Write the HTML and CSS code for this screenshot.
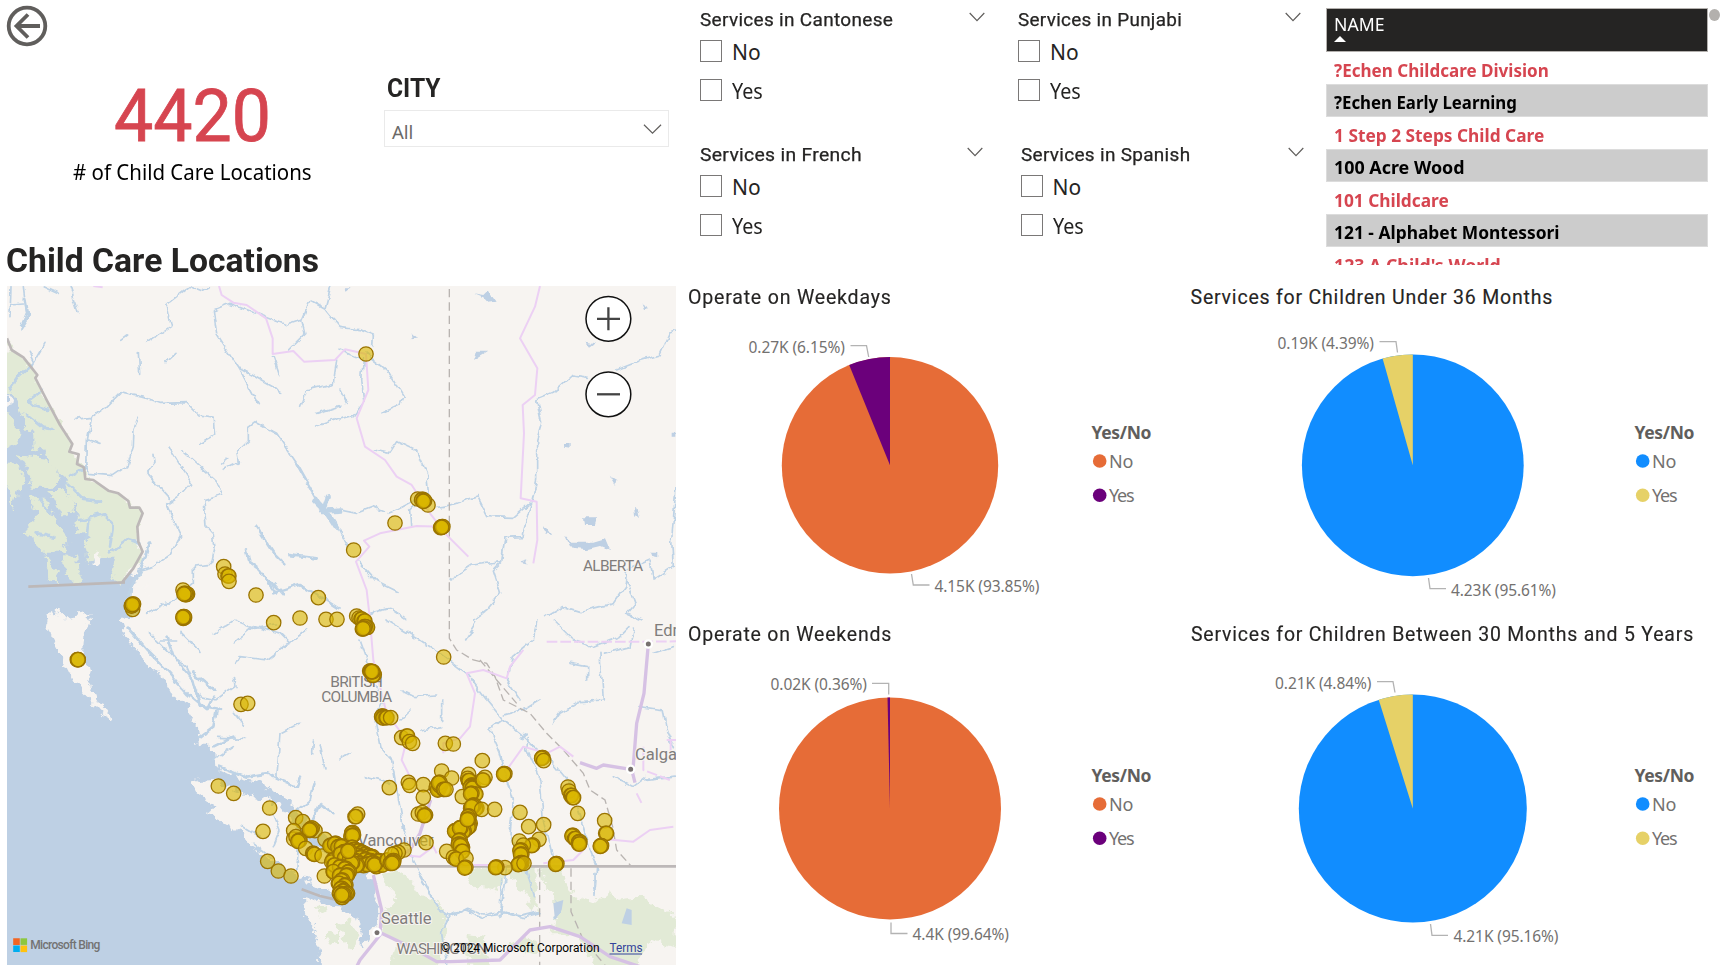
FILE: index.html
```html
<!DOCTYPE html>
<html lang="en">
<head>
<meta charset="utf-8">
<title>Child Care Locations</title>
<link rel="stylesheet" href="styles.css">
</head>
<body>
<div class="page">
  <div class="left">
    <header class="summary">
      <div class="back-row">
        <svg class="back" viewBox="0 0 42 42"><circle cx="21" cy="21" r="18.3"/><path d="M34 21H10M22 9.5L10.5 21L22 32.5"/></svg>
      </div>
      <div class="summary-row">
        <div class="kpi">
          <div class="kpi-value"><span class="fit" data-w="157">4420</span></div>
          <div class="kpi-label"><span class="fit" data-w="239">#&nbsp;of Child Care Locations</span></div>
        </div>
        <div class="city">
          <div class="city-title"><span class="fit" data-w="54">CITY</span></div>
          <div class="select"><span class="fit" data-w="21">All</span>
            <svg class="select-arrow" viewBox="0 0 20 12"><path d="M1 1.5L10 10.5L19 1.5"/></svg></div>
        </div>
      </div>
      <h1><span class="fit" data-w="313">Child Care Locations</span></h1>
    </header>

    <div class="map">
      <svg class="map-svg" viewBox="7 286 669 679">
        <defs>
          <filter id="coast" x="-5%" y="-5%" width="110%" height="110%"><feTurbulence type="fractalNoise" baseFrequency="0.035" numOctaves="4" seed="4"/><feDisplacementMap in="SourceGraphic" scale="42" xChannelSelector="R" yChannelSelector="G"/></filter>
          <filter id="wiggle" x="-5%" y="-5%" width="110%" height="110%"><feTurbulence type="fractalNoise" baseFrequency="0.03" numOctaves="3" seed="9"/><feDisplacementMap in="SourceGraphic" scale="20" xChannelSelector="R" yChannelSelector="G"/></filter>
        </defs>
        <rect x="7" y="286" width="669" height="679" fill="#f7f4f1"/>
        <g transform="translate(0 280) scale(.33333)">
          <g filter="url(#coast)">
            <path class="water" d="M-20 300L60 340L120 460L240 600L330 760L368 905L430 870L385 940L420 1000L365 1020L372 1065L400 1100L450 1160L490 1190L520 1250L560 1280L590 1330L600 1400L635 1400L640 1460L680 1480L760 1500L850 1545L890 1590L930 1630L985 1670L1040 1720L1090 1780L1120 1830L1100 1900L1060 1880L1020 1878L912 1850L915 1900L940 1940L955 2000L968 2090L-20 2090Z"/>
            <path class="water" d="M1060 1740L1120 1800L1120 1860L1140 1900L1110 1960L1085 2010L1085 1960L1070 1910L1010 1880Z"/>
            <path class="land" d="M577 1508L600 1497L640 1494L690 1525L760 1550L840 1572L870 1610L895 1665L955 1705L990 1750L1020 1790L1030 1850L990 1835L920 1800L860 1765L750 1700L715 1650L620 1600L645 1580L590 1540Z"/>
            <path class="land" d="M136 1003L200 1012L272 1000L250 1060L245 1130L275 1165L262 1205L300 1260L335 1315L310 1305L270 1260L225 1210L200 1160L180 1120L150 1065Z"/>
            <path class="green" d="M5 160L35 210L70 232L112 285L106 294L140 360L180 435L217 492L208 515L236 523L231 552L252 562L256 597L280 600L325 632L355 640L385 663L390 683L418 683L428 700L412 740L415 785L428 815L400 865L368 905L345 900L335 870L345 830L325 830L300 850L275 830L262 850L252 800L270 760L225 765L240 700L200 640L205 600L165 565L150 530L100 500L100 470L75 440L60 400L45 360L5 320Z"/>
            <path class="green" d="M5 370L50 430L65 460L45 490L5 505ZM55 520L130 530L165 560L185 600L150 620L95 620L80 560ZM5 560L50 550L75 600L55 640L40 690L30 640ZM90 650L130 650L150 700L190 750L205 790L180 815L130 815L90 780L85 740L110 700ZM145 630L180 630L215 660L225 700L200 705L170 680ZM130 820L155 850L180 905L150 895ZM190 820L235 830L240 905L215 905L190 870Z"/>
            <path class="land" d="M278 825L298 818L298 855L278 855ZM21 345L33 370L30 385L21 380ZM145 1002L160 990L190 1012ZM400 930L440 910L450 990L400 985Z"/>
          </g>
          <g class="river" filter="url(#wiggle)">
            <path stroke-width="8" d="M100 250L55 290L30 330M125 330L85 360L100 375L145 390M80 400L130 440L160 445M210 590L260 560M200 610L250 660L300 665M240 720L310 700L340 730L330 800M260 780L265 720M330 820L380 780L415 790M150 700L120 660M110 760L160 770"/>
            <path d="M33 20L30 110M70 20L80 100L60 150M30 75L70 72M135 20L178 40M210 20L234 95M135 190L100 250M88 220L100 245"/>
            <path stroke-width="10" d="M75 55L85 110L62 145"/>
            <path d="M570 18L500 72L515 140L440 190M380 165L362 178M418 215L422 280M525 220L498 245M575 20L605 32L625 20"/>
            <path d="M225 418L275 412L320 380L362 338L430 352L480 370L560 368L600 408L645 415L650 460L595 490M275 412L262 480L260 580L340 587L380 560L400 500L402 445L415 415M265 480L300 490"/>
            <path d="M462 520L465 550L440 580L508 655M510 507L575 610L550 640L500 672L542 765L510 825L460 860L420 870M545 510L600 560L650 605L668 645L612 662L618 735L640 760L645 800L635 850L580 855L580 910L520 960L440 1000"/>
            <path stroke-width="9" d="M448 785L430 850L395 920L390 1010M890 550L935 630L970 690"/>
            <path stroke-width="16" d="M945 660L975 690L1010 745M965 695L1020 690M975 680L985 650"/>
            <path d="M890 550L830 460L765 425L745 440V480L710 515L715 545L670 568M680 535L662 552"/>
            <path d="M720 270L650 160L640 90L690 70L790 108L860 135L905 120L915 160L865 210M905 120L930 60L975 85L1020 140M975 85L992 20M720 265L845 335M720 270L772 368M820 230L840 290M1010 240L1000 310L920 330L902 385M950 400L1020 378M950 438L1020 415"/>
            <path stroke-width="8" d="M768 740L820 820L850 850M738 805L745 845L780 870L830 940M865 825L950 835M820 940L900 915L960 950L1015 985M810 900L850 945"/>
            <path d="M640 1060L700 1020L760 1045L830 1035M710 1150L720 1130L800 1140L880 1080L920 1050M700 1090L760 1040L840 1060L870 1090M700 1190L705 1220L650 1260L600 1250M700 1300L732 1340M898 1330L840 1360L830 1500M960 1390L975 1470M940 1380L938 1420M700 1400L640 1440M740 1375L650 1372M540 1060L600 1120M450 1060L520 1130L560 1160L600 1250M480 1080L530 1080"/>
            <path stroke-width="8" d="M380 1040L440 1110L500 1170L560 1240L620 1290L640 1250M500 1070L520 1130L580 1200L600 1280L660 1290M580 1180L640 1230M600 1370L640 1340L650 1290M640 1400L700 1370M660 1460L740 1490L800 1480L840 1500L890 1520L900 1490M880 1600L930 1560L940 1510M930 1640L960 1570L1000 1600"/>
            <path d="M730 1640L780 1670M820 1600L840 1650L820 1700M890 1780L895 1700M760 1690L820 1740"/>
          </g>
          <g transform="translate(1020 0)" class="river" filter="url(#wiggle)">
            <path d="M0 142L60 150L100 165L98 200M78 222L140 270L190 350L180 375L120 402M70 235L65 300L72 370L40 410L0 420M0 330L20 370M0 210L60 235"/>
            <path d="M100 510L145 520L170 482L230 510L260 580L265 640L170 690L145 700M215 740L212 690L260 640M0 690L50 700L100 680L130 692M0 750L25 800M55 845L110 905L180 940"/>
            <path d="M290 682L330 675L410 650L440 710L520 712L575 665L590 600L590 480L605 430L590 360L640 340L700 285L745 292M830 270L900 242L960 225L990 160L1008 153M575 665L545 770L495 772L485 845L400 855L330 900M485 845L460 870L482 940L440 990L400 1020M90 1000L150 985L200 1020"/>
            <path d="M620 1010L670 980L720 995L820 970L855 920L860 870L930 840L940 900L1000 860L995 780L1008 620M860 900L885 970L860 1000L910 1020"/>
          </g>
          <g class="lake" transform="translate(1020 0)" filter="url(#wiggle)">
            <path d="M400 40L430 45L445 30L470 65L445 68L430 52ZM410 212L445 212L425 225L402 240L408 222ZM675 768L690 785L760 785L795 775L810 810L780 798L740 808L690 802ZM732 712L772 712L765 735L735 735ZM812 588L832 600L828 615ZM885 675L892 678L900 718L888 705ZM930 815H952V832L935 828ZM738 185L765 190L750 200ZM675 492H692V503L675 500ZM995 455H1006V470H995ZM538 845L562 838L558 850ZM212 160L232 175L215 178ZM12 22H32L20 32ZM905 70L928 85L912 87ZM612 735L634 765L615 760Z"/>
          </g>
          <g transform="translate(1020 1020)" class="river" filter="url(#wiggle)">
            <path d="M138 0L240 60L300 100L380 160L440 240L490 300L560 360L640 430L690 490L750 690L770 740L765 820M490 300L450 330L480 400L500 470L520 540L510 640L540 720M565 350L560 390L600 480L610 600L640 720M490 285L560 265L600 240M590 0L580 60L520 110L500 180L540 240"/>
            <path stroke-width="8" d="M560 340L545 360M650 850L670 890M860 880L870 910M1005 470L920 480"/>
            <path d="M60 60L100 170L130 250L105 300L120 380L155 420L190 620L210 700L240 760L300 880L330 890L300 930L310 980M330 880L380 870L430 890L500 880L550 890L600 880M500 740L480 890M580 840L560 780L560 720M180 210L220 230L290 225M180 300L210 270M245 330L305 320M305 240V300M70 470L150 490M0 420L30 400M380 60L410 10"/>
            <path d="M640 0L700 60L760 80L840 50L870 20M690 130L740 140L740 180M780 100L790 240L720 245L660 280L640 310M790 100L870 80L880 30M900 260L970 270L980 330L1000 380M940 100L1000 80M820 470L880 500L920 470"/>
          </g>
          <path class="green" filter="url(#coast)" d="M945 1885L985 1875L990 1900L950 1910ZM975 1955L1020 1960V1990L980 1980ZM1145 1775L1180 1770L1230 1800L1260 1850L1310 1860L1340 1900L1330 1990L1310 2070H1160L1190 1990L1150 1960L1150 1900L1190 1860ZM1400 1765H1510L1500 1830L1420 1820ZM1520 1765H1610V1900L1580 1850ZM1620 1765H1680L1720 1850L1780 1870L1830 1830L1850 1860L1920 1850L1980 1880L2030 1920V2010L1950 1980L1900 2080H1800L1760 2010L1720 1960L1650 1960L1680 1870L1630 1820ZM1010 1930L1050 1920L1080 1980L1060 2010L1040 2000ZM1400 1965L1450 1970L1470 2060H1400ZM1520 1990L1570 1970L1620 2000L1580 2030Z"/>
          <path class="river" filter="url(#wiggle)" d="M1260 1790L1320 1890L1350 1910L1400 1885L1450 1905L1500 1895L1560 1910L1620 1895M1500 1895L1505 1800M1350 1910L1325 1960L1340 2050M1600 1850L1580 1770M1785 1780L1785 1840M1668 1860L1680 1890L1665 1920"/>
          <g class="lake"><path d="M1660 1870L1690 1860L1685 1890L1665 1920ZM1880 1885L1895 1890V1935L1865 1930Z"/></g>
          <g class="state">
            <path d="M1348 27V1020" stroke-dasharray="25 15"/>
            <path d="M1348 1023V1075L1370 1110L1420 1140L1460 1150L1485 1190L1510 1260L1590 1300L1640 1360L1690 1410L1750 1480L1770 1530L1815 1560L1838 1640L1850 1710L1895 1760M1440 1140L1490 1200L1550 1270" stroke-dasharray="25 12"/>
            <path d="M1619 1765V2055M1713 1765V1895L1750 1980L1815 2055" stroke-dasharray="25 15"/>
          </g>
          <g class="border"><path d="M21 175L35 210L70 232L112 285L106 294L140 360L180 435L217 492L208 515L236 523L231 552L252 562L256 597L280 600L325 632L355 640L385 663L390 683L418 683L428 700L412 740L415 785L428 815L400 865L368 905M85 920L375 907M905 1828L960 1848L1020 1862"/><path d="M1050 1759H2028"/></g>
          <g class="road">
            <path d="M280 18L308 22M657 18L665 45L700 68L740 75L798 115L818 175V222L880 213L912 245L1005 240L1035 208L1098 222L1105 330L1070 415L1095 500L1155 540L1190 590L1235 615L1290 700L1340 765L1405 830M1325 740L1250 738L1140 760L1092 782L1108 800L1068 845L1100 930L1110 1020L1120 1140L1160 1300L1220 1380L1205 1440L1240 1510"/>
            <path d="M1620 18L1605 80L1560 175L1612 265L1605 345L1568 375L1572 460L1562 655L1610 665L1612 780L1600 850M1570 1110L1530 1160L1520 1195L1450 1170L1400 1180L1425 1240L1410 1340L1380 1375L1330 1390L1330 1420M1520 1470L1570 1400L1640 1420L1680 1400L1720 1430M1820 1678L1900 1685L1950 1650L2020 1640M1420 1755L1520 1755M1630 1750L1720 1740L1750 1710M1200 1725L1260 1730L1300 1700L1310 1720"/>
            <path d="M1640 1085H1920L2028 1084M1930 1400V1470L2010 1500M1910 1540L1925 1570M2000 1380H2028M2012 1380V1440" stroke-dasharray="32 9"/>
          </g>
          <g class="highway">
            <path d="M1945 1092L1932 1240L1910 1330L1898 1480L1905 1508M1892 1468L1810 1455L1790 1465L1740 1448M1120 1785L1145 1890L1140 1965L1080 2040L1070 2060M1145 1960L1230 2000L1310 2045H1350L1500 2040L1590 1950L1650 1940L1740 1970L1830 2030L1920 2060M1292 1560L1260 1660L1230 1710L1180 1740"/>
          </g>
          <g class="town"><circle cx="1945" cy="1092" r="11"/><circle cx="1892" cy="1468" r="11"/><circle cx="1131" cy="1958" r="11"/></g>
        </g>
        <g class="place">
          <text x="583" y="570.7" textLength="60">ALBERTA</text>
          <text x="330.3" y="687" textLength="52.5">BRITISH</text>
          <text x="321.2" y="702" textLength="71">COLUMBIA</text>
          <text class="city-name" x="654" y="635.5">Edmonton</text>
          <text class="city-name" x="635" y="760">Calgary</text>
          <text class="city-name" x="357.5" y="846" textLength="76">Vancouver</text>
          <text class="city-name" x="381" y="924.2" textLength="50.5">Seattle</text>
          <text x="396.5" y="954" textLength="91">WASHINGTON</text>
        </g>
        <g id="markers" class="markers"></g>
        <g class="zoom-btn"><circle cx="608.4" cy="318.8" r="22.4"/><path d="M597 318.8H620M608.4 307.3V330.3"/></g>
        <g class="zoom-btn"><circle cx="608.4" cy="394.3" r="22.4"/><path d="M597 394.3H620"/></g>
        <g><path fill="#f26522" d="M13.2 938.3h6.6v6.6h-6.6z"/><path fill="#8dc73f" d="M20.5 938.3h6.6v6.6h-6.6z"/><path fill="#00adef" d="M13.2 945.5h6.6v6.6h-6.6z"/><path fill="#ffc20e" d="M20.5 945.5h6.6v6.6h-6.6z"/></g>
        <text class="bing" x="30.3" y="949.3" textLength="70">Microsoft Bing</text>
        <text class="copyright" x="441" y="952" textLength="158.5" lengthAdjust="spacingAndGlyphs">© 2024 Microsoft Corporation</text>
        <text class="copyright terms" x="609.5" y="952" textLength="33" lengthAdjust="spacingAndGlyphs">Terms</text>
        <path d="M609.5 954H642" stroke="#33439b" stroke-width="1"/>
      </svg>
    </div>
  </div>

  <div class="right">
    <div class="filters">
      <div class="slicers">
        <section class="slicer">
          <div class="slicer-head"><span class="fit" data-w="193">Services in Cantonese</span><svg class="chev" viewBox="0 0 16 10"><path d="M.7 1L8 8.6L15.3 1"/></svg></div>
          <label class="option"><i class="box"></i><span class="fit" data-w="29">No</span></label>
          <label class="option"><i class="box"></i><span class="fit" data-w="31">Yes</span></label>
        </section>
        <section class="slicer">
          <div class="slicer-head"><span class="fit" data-w="164.500">Services in Punjabi</span><svg class="chev" viewBox="0 0 16 10"><path d="M.7 1L8 8.6L15.3 1"/></svg></div>
          <label class="option"><i class="box"></i><span class="fit" data-w="29">No</span></label>
          <label class="option"><i class="box"></i><span class="fit" data-w="31">Yes</span></label>
        </section>
        <section class="slicer">
          <div class="slicer-head"><span class="fit" data-w="162">Services in French</span><svg class="chev" viewBox="0 0 16 10"><path d="M.7 1L8 8.6L15.3 1"/></svg></div>
          <label class="option"><i class="box"></i><span class="fit" data-w="29">No</span></label>
          <label class="option"><i class="box"></i><span class="fit" data-w="31">Yes</span></label>
        </section>
        <section class="slicer">
          <div class="slicer-head"><span class="fit" data-w="169.500">Services in Spanish</span><svg class="chev" viewBox="0 0 16 10"><path d="M.7 1L8 8.6L15.3 1"/></svg></div>
          <label class="option"><i class="box"></i><span class="fit" data-w="29">No</span></label>
          <label class="option"><i class="box"></i><span class="fit" data-w="31">Yes</span></label>
        </section>
      </div>
      <div class="table">
        <div class="thead"><span class="fit" data-w="51">NAME</span><i class="sort"></i></div>
        <div class="row"><span class="fit" data-w="214.500">?Echen Childcare Division</span></div>
        <div class="row alt"><span class="fit" data-w="183">?Echen Early Learning</span></div>
        <div class="row"><span class="fit" data-w="210.500">1 Step 2 Steps Child Care</span></div>
        <div class="row alt"><span class="fit" data-w="130.500">100 Acre Wood</span></div>
        <div class="row"><span class="fit" data-w="115">101 Childcare</span></div>
        <div class="row alt"><span class="fit" data-w="226">121 - Alphabet Montessori</span></div>
        <div class="row"><span class="fit" data-w="167">123 A Child's World</span></div>
      </div>
      <i class="scroll-thumb"></i>
    </div>

    <div class="charts">
      <section class="chart">
        <h2><span class="fit" data-w="203.500">Operate on Weekdays</span></h2>
        <svg class="chart-svg" width="500" height="310" viewBox="680 310 500 310">
          <circle cx="890" cy="465.3" r="108.2" fill="#e66c37"/>
          <path fill="#6b007b" d="M890 465.300V357.100A108.200 108.200 0 0 0 849.200 365.100Z"/>
          <path class="lead" d="M850.500 345.700H866.500L868.700 357M911.500 574L913.300 585H929.500"/>
          <text class="val" x="748.500" y="353" textLength="96.500">0.27K (6.15%)</text>
          <text class="val" x="934.500" y="592.400" textLength="105">4.15K (93.85%)</text>
          <text class="leg-title" x="1091.500" y="439" textLength="60">Yes/No</text>
          <circle cx="1099.700" cy="461" r="6.800" fill="#e66c37"/><text class="leg" x="1109" y="468.300" textLength="24.500">No</text>
          <circle cx="1099.700" cy="495.300" r="6.800" fill="#6b007b"/><text class="leg" x="1109" y="502.300" textLength="25.500">Yes</text>
        </svg>
      </section>
      <section class="chart">
        <h2><span class="fit" data-w="363">Services for Children Under 36 Months</span></h2>
        <svg class="chart-svg" width="544" height="310" viewBox="1180 310 544 310">
          <circle cx="1412.800" cy="465.300" r="110.900" fill="#118dff"/>
          <path fill="#e6d167" d="M1412.800 465.300V354.400A110.900 110.900 0 0 0 1382.600 358.600Z"/>
          <path class="lead" d="M1379.500 341.700H1396L1397.500 352.500M1428.500 578L1430 588.700H1446"/>
          <text class="val" x="1277.500" y="349.400" textLength="96.500">0.19K (4.39%)</text>
          <text class="val" x="1451" y="596.400" textLength="105">4.23K (95.61%)</text>
          <text class="leg-title" x="1634.500" y="439" textLength="60">Yes/No</text>
          <circle cx="1642.700" cy="461" r="6.800" fill="#118dff"/><text class="leg" x="1652" y="468.300" textLength="24.500">No</text>
          <circle cx="1642.700" cy="495.300" r="6.800" fill="#e6d167"/><text class="leg" x="1652" y="502.300" textLength="25.500">Yes</text>
        </svg>
      </section>
      <section class="chart">
        <h2><span class="fit" data-w="204.500">Operate on Weekends</span></h2>
        <svg class="chart-svg" width="500" height="318" viewBox="680 650 500 318">
          <circle cx="890" cy="808.500" r="111" fill="#e66c37"/>
          <path fill="#6b007b" d="M890 808.500V697.500H887.500Z"/>
          <path class="lead" d="M872 683.300H888.700V694.500M891 922.500V933.500H907.500"/>
          <text class="val" x="770.500" y="690" textLength="96.500">0.02K (0.36%)</text>
          <text class="val" x="912.500" y="940.400" textLength="96.500">4.4K (99.64%)</text>
          <text class="leg-title" x="1091.500" y="782" textLength="60">Yes/No</text>
          <circle cx="1099.700" cy="804" r="6.800" fill="#e66c37"/><text class="leg" x="1109" y="811.300" textLength="24.500">No</text>
          <circle cx="1099.700" cy="838.300" r="6.800" fill="#6b007b"/><text class="leg" x="1109" y="845.300" textLength="25.500">Yes</text>
        </svg>
      </section>
      <section class="chart">
        <h2><span class="fit" data-w="503">Services for Children Between 30 Months and 5 Years</span></h2>
        <svg class="chart-svg" width="544" height="318" viewBox="1180 650 544 318">
          <circle cx="1412.800" cy="808.500" r="114" fill="#118dff"/>
          <path fill="#e6d167" d="M1412.800 808.500V694.500A114 114 0 0 0 1378.700 699.700Z"/>
          <path class="lead" d="M1377 681.700H1393L1395 692.500M1430.500 924L1432 935.300H1448"/>
          <text class="val" x="1275" y="689.400" textLength="96.500">0.21K (4.84%)</text>
          <text class="val" x="1453.500" y="942" textLength="105">4.21K (95.16%)</text>
          <text class="leg-title" x="1634.500" y="782" textLength="60">Yes/No</text>
          <circle cx="1642.700" cy="804" r="6.800" fill="#118dff"/><text class="leg" x="1652" y="811.300" textLength="24.500">No</text>
          <circle cx="1642.700" cy="838.300" r="6.800" fill="#e6d167"/><text class="leg" x="1652" y="845.300" textLength="25.500">Yes</text>
        </svg>
      </section>
    </div>
  </div>
</div>
<script src="page.js"></script>
</body>
</html>
```
FILE: styles.css
```css
* { box-sizing: border-box; }
body { margin: 0; background: #fff; color: #252423; font-family: "Noto Sans", sans-serif; overflow: hidden; }
.page { display: grid; grid-template-columns: 680px 1044px; width: 1724px; height: 968px; }
.fit { display: inline-block; transform-origin: 0 50%; white-space: nowrap; }
.left { display: flex; flex-direction: column; min-width: 0; }

/* Summary */
.summary { height: 286px; display: flex; flex-direction: column; }
.back-row { height: 71px; padding: 5px 0 0 6px; }
.back { width: 42px; height: 42px; display: block; fill: none; stroke: #605e5c; stroke-width: 3.8; }
.summary-row { display: flex; }
.kpi { width: 384px; padding-top: 8.500px; }
.kpi-value { font: 400 73px/73px Roboto, sans-serif; -webkit-text-stroke: .8px #d64550; color: #d64550; padding-left: 113.500px; height: 73px; }
.kpi-label { font-size: 21.500px; line-height: 30px; margin-top: 4px; padding-left: 73px; color: #000; }
.city-title { font: 700 25.500px/30px Roboto, sans-serif; padding: 1.500px 0 0 3px; height: 39px; }
.select { width: 285px; height: 37px; border: 1.500px solid #eaeaea; display: flex; align-items: center; justify-content: space-between; padding: 5px 6px 0 7px; font-size: 18.500px; color: #6b6967; }
.select-arrow { width: 19px; height: 12px; margin-top: -4px; fill: none; stroke: #605e5c; stroke-width: 1.200; }
h1 { margin: auto 0 6px 6px; font: 700 34px/40px Roboto, sans-serif; height: 40px; }

/* Map */
.map { margin-left: 7px; width: 669px; height: 679px; overflow: hidden; }
.map-svg { display: block; width: 669px; height: 679px; }
.water, .lake { fill: #bed0e4; }
.land { fill: #f7f4f1; }
.green { fill: #e2ead6; }
.river { fill: none; stroke: #bed3e6; stroke-width: 5; stroke-linejoin: round; stroke-linecap: round; }
.border { fill: none; stroke: #bdb8b8; stroke-width: 8; stroke-linejoin: round; }
.state { fill: none; stroke: #b9b4b1; stroke-width: 4; }
.road { fill: none; stroke: #ecd0f4; stroke-width: 6; stroke-linejoin: round; }
.highway { fill: none; stroke: #d6c1e4; stroke-width: 10; stroke-linejoin: round; }
.town { fill: #77716f; stroke: #fff; stroke-width: 7; }
.place { font: 15.500px Roboto, sans-serif; fill: #807d7c; stroke: #f7f4f1; stroke-width: 2px; paint-order: stroke; }
.city-name { font-size: 16.500px; }
.markers { fill: #dab600; fill-opacity: .62; stroke: #9b7400; stroke-width: 1.300; }
.zoom-btn { fill: #fff; stroke: #111; stroke-width: 1.500; }
.zoom-btn path { stroke: #444; stroke-width: 2.300; }
.bing { font: 500 12px Roboto, sans-serif; fill: #737373; }
.copyright { font: 12.500px Roboto, sans-serif; fill: #000; }
.terms { fill: #33439b; }

/* Slicers */
.filters { display: flex; height: 280px; position: relative; }
.slicers { width: 646px; padding-left: 20px; display: grid; grid-template-columns: 318px 1fr; grid-template-rows: 135px 135px; }
.slicer { padding-top: 7.500px; width: 285px; }
.slicer:nth-child(2) { width: 283px; }
.slicer:nth-child(3) { width: 283px; }
.slicer:nth-child(4) { margin-left: 2.500px; width: 283px; }
.slicer-head { display: flex; justify-content: space-between; height: 24px; font: 400 18px/24px Roboto, sans-serif; letter-spacing: .3px; -webkit-text-stroke: .25px #252423; }
.chev { width: 16px; height: 10px; margin-top: 4.500px; fill: none; stroke: #605e5c; stroke-width: 1.200; flex: none; }
.option { display: flex; align-items: center; gap: 10px; height: 39px; font-size: 21px; line-height: 37px; }
.option .fit { padding-top: 2px; }
.box { width: 22px; height: 22px; border: 1.500px solid #7a7877; }

/* Name table */
.table { width: 382px; height: 257.500px; margin-top: 7.500px; overflow: hidden; }
.thead { height: 44px; background: #252423; color: #fff; border: 1px solid #b3b0ad; border-bottom-width: 1.500px; padding: 3.500px 0 0 6.500px; font-size: 18px; line-height: 24px; }
.thead .fit { display: block; width: max-content; }
.sort { display: block; width: 0; height: 0; border: 6.500px solid transparent; border-top: 0; border-bottom: 6.500px solid #fff; }
.row { height: 32.500px; padding-left: 7.500px; font-size: 17px; font-weight: 700; line-height: 37px; color: #d64550; }
.row.alt { background: #ccc; color: #000; box-shadow: inset 0 0 0 1px #dcdcdc; }
.scroll-thumb { width: 11px; height: 12px; border-radius: 50%; background: #b3b0ad; margin: 8.500px 0 0 1px; }

/* Charts */
.charts { display: grid; grid-template-columns: 500px 544px; grid-template-rows: 340px 348px; }
.chart h2 { margin: 0; height: 30px; padding: 5px 0 0 7.500px; font: 400 19.500px/25px Roboto, sans-serif; letter-spacing: .8px; -webkit-text-stroke: .15px #252423; }
.chart:nth-child(even) h2 { padding-left: 10.500px; }
.chart:nth-child(n+3) h2 { padding-top: 2px; }
.chart-svg { display: block; }
.val { font-size: 15.500px; fill: #737170; }
.leg { font-size: 18px; fill: #737170; }
.leg-title { font-size: 17.500px; font-weight: 700; fill: #605e5c; }
.lead { fill: none; stroke: #b3b3b3; stroke-width: 1.300; }
```
FILE: page.js
```js
// Condense each label to its nominal width.
document.querySelectorAll('.fit').forEach(function (el) {
  el.style.transform = 'scaleX(' + (parseFloat(el.dataset.w) / el.offsetWidth) + ')';
});

// Location markers by map tile: x, y, number of overlapping locations.
var tiles = [
  [0, 280, [[671,860,1],[675,882,1],[684,888,2],[687,904,1],[768,945,1],[955,953,1],[549,930,1],[560,942,2],[556,944,2],[553,940,3],[398,988,1],[395,976,3],[398,972,3],[551,1013,3],[550,1010,3],[821,1028,1],[900,1014,1],[978,1018,1],[1011,1018,1]]],
  [340, 280, [[78,222,1],[233,657,1],[264,675,1],[246,658,3],[251,662,3],[165,729,1],[303,741,3],[306,740,3],[41,810,1],[50,1008,1],[57,1014,1],[63,1017,2],[72,1023,2]]],
  [0, 620, [[232,119,2],[234,119,1],[723,253,1],[743,250,1],[655,498,1],[701,520,1],[809,564,1],[789,634,1],[803,724,1],[835,753,1],[873,768,1],[887,593,1],[908,605,1],[881,632,1],[945,632,1],[934,624,2],[928,631,2],[930,628,3],[881,657,1],[888,650,1],[900,660,1],[895,662,3],[917,685,1],[938,700,2],[943,703,1],[966,708,1],[975,658,1],[998,675,2],[991,676,3],[998,720,2],[995,726,1],[973,768,1],[1000,755,2]]],
  [340, 620, [[80,22,2],[67,27,2],[73,20,2],[70,24,3],[311,111,1],[89,153,2],[100,164,3],[96,155,2],[93,155,2],[126,288,3],[130,292,3],[138,293,2],[152,293,1],[185,353,1],[200,348,2],[208,365,1],[218,370,1],[316,370,1],[340,372,1],[427,422,1],[148,503,1],[205,487,1],[209,496,1],[250,494,1],[250,532,1],[305,453,1],[335,474,1],[235,582,1],[247,578,1],[254,585,3],[290,500,3],[294,508,3],[300,495,3],[297,487,3],[310,508,2],[318,508,1],[386,463,1],[383,475,1],[385,482,2],[395,495,3],[392,500,3],[398,503,3],[435,472,1],[427,480,2],[492,461,3],[606,413,3],[611,422,1],[684,501,1],[687,513,1],[692,526,2],[698,533,2],[713,580,1],[794,602,1],[797,640,2],[782,677,3],[697,646,3],[704,656,2],[717,665,3],[716,672,2],[367,530,1],[405,522,2],[393,520,3],[408,564,3],[393,563,3],[400,555,3],[396,558,3],[425,568,1],[464,568,1],[388,610,3],[378,625,3],[385,620,3],[370,633,3],[352,637,3],[345,632,3],[360,623,3],[385,588,3],[383,597,3],[358,660,3],[365,682,3],[356,672,3],[362,675,3],[365,694,2],[258,668,1],[320,694,1],[340,712,1],[347,717,2],[378,715,1],[375,742,3],[540,577,1],[566,620,1],[611,614,1],[597,658,1],[538,663,1],[576,675,3],[550,675,1],[541,690,3],[543,702,3],[543,728,3],[536,732,3],[552,730,1],[495,743,1],[468,741,3],[648,731,3],[53,582,1],[45,590,2],[36,638,3],[34,648,3],[38,645,3],[-15,670,3],[-5,680,3],[5,678,3],[12,695,3],[35,682,2],[42,688,3],[55,692,3],[65,697,3],[75,702,3],[85,707,3],[95,710,3],[50,705,3],[62,712,3],[75,718,3],[90,722,3],[0,702,2],[15,712,3],[30,715,3],[45,722,3],[60,730,3],[72,735,3],[82,732,3],[50,735,3],[35,728,3],[25,692,3],[115,722,3],[110,738,3],[125,735,2],[98,728,3],[104,733,3],[140,720,2],[192,690,1],[175,697,1],[165,700,1],[155,703,1],[152,728,3],[159,722,3],[157,728,3],[-18,735,2],[0,740,3],[15,745,3],[25,755,3],[-20,755,1],[0,765,3],[20,765,3],[5,780,3],[-5,790,2],[15,795,3],[3,805,3],[10,812,3],[20,820,3],[5,832,2],[-2,820,2],[12,825,3],[6,823,3]]]
];
var layer = document.getElementById('markers');
tiles.forEach(function (t) {
  t[2].forEach(function (m) {
    for (var i = 0; i < m[2]; i++) {
      var c = document.createElementNS('http://www.w3.org/2000/svg', 'circle');
      c.setAttribute('cx', t[0] + m[0] / 3 + (i === 1 ? 0.9 : i === 2 ? -0.4 : 0));
      c.setAttribute('cy', t[1] + m[1] / 3 + (i === 2 ? 0.7 : 0));
      c.setAttribute('r', 7.2);
      layer.appendChild(c);
    }
  });
});
```
